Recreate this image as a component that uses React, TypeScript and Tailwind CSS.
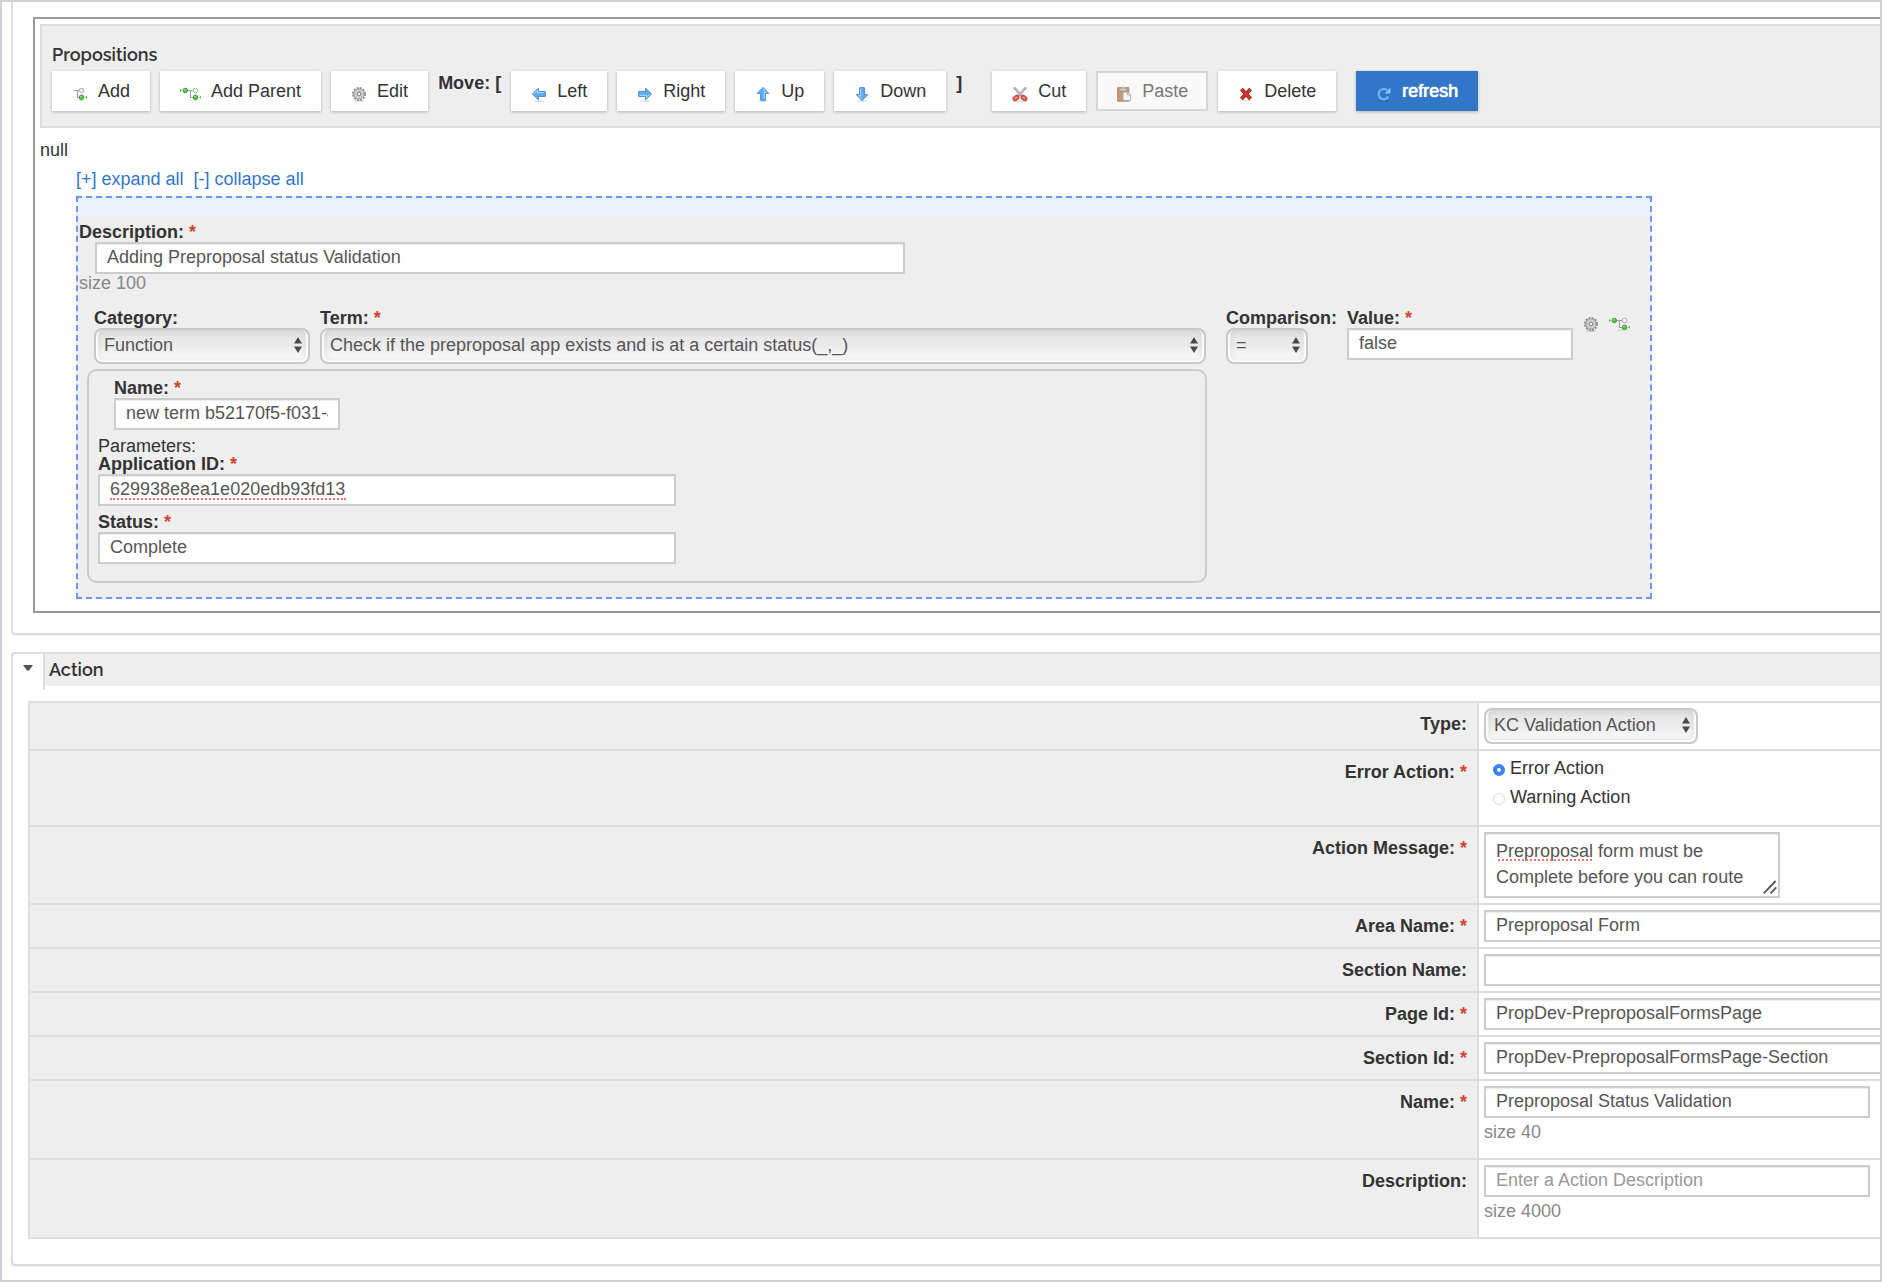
import type { ReactNode } from 'react';

const INPUT =
  'block h-8 border-2 border-[#ccc] bg-white px-[10px] pb-[2px] text-[18px] text-[#555] shadow-[inset_0_1px_1px_rgba(0,0,0,0.08)] outline-none placeholder:text-[#999]';
const LABEL = 'block text-[18px] leading-5 font-bold text-[#333]';
const HINT = 'text-[18px] text-[#888]';

/* ---------- icons ---------- */

function TreeNode({ x, y, green }: { x: number; y: number; green?: boolean }) {
  return (
    <>
      <circle
        cx={x}
        cy={y}
        r="2.3"
        fill={green ? '#4fc43f' : '#f2f2f2'}
        stroke={green ? '#3c9a33' : '#a5a5a5'}
        strokeWidth="0.9"
      />
      <circle cx={x - 0.5} cy={y - 0.7} r="0.8" fill={green ? '#a5ec94' : '#fff'} />
    </>
  );
}

function AddIcon() {
  return (
    <svg width="16" height="16" viewBox="0 0 16 16" aria-hidden="true">
      <ellipse cx="9" cy="14" rx="5" ry="0.8" fill="#000" opacity="0.12" />
      <path d="M2 4.5h7M5.5 4.5v7h4" fill="none" stroke="#9b9b9b" strokeWidth="1.1" />
      <TreeNode x={9.5} y={4.5} />
      <TreeNode x={9.5} y={11.3} green />
      <path d="M15 9.8v3l-2-1.5z" fill="#4fb541" />
    </svg>
  );
}

function AddParentIcon() {
  return (
    <svg width="21" height="16" viewBox="0 0 21 16" aria-hidden="true">
      <ellipse cx="14" cy="14" rx="6" ry="0.8" fill="#000" opacity="0.12" />
      <path d="M7 4.5h8M10.5 4.5v7h4" fill="none" stroke="#9b9b9b" strokeWidth="1.1" />
      <path d="M0 3v3l2-1.5z" fill="#4fb541" />
      <TreeNode x={5.3} y={4.5} green />
      <TreeNode x={15.5} y={4.5} />
      <TreeNode x={15.5} y={11.3} green />
      <path d="M21 9.8v3l-2-1.5z" fill="#4fb541" />
    </svg>
  );
}

function GearIcon() {
  return (
    <svg width="16" height="16" viewBox="0 0 16 16" aria-hidden="true">
      <ellipse cx="8" cy="14.8" rx="5" ry="0.9" fill="#000" opacity="0.18" />
      <circle cx="8" cy="8" r="6" fill="none" stroke="#8c8c8c" strokeWidth="2" strokeDasharray="1.9 1.24" />
      <circle cx="8" cy="8" r="5" fill="#dadada" stroke="#959595" strokeWidth="0.9" />
      <path d="M8 3.6v8.8M3.6 8h8.8M4.9 4.9l6.2 6.2M11.1 4.9l-6.2 6.2" stroke="#adadad" strokeWidth="0.8" />
      <circle cx="8" cy="8" r="1.8" fill="#f4f4f4" stroke="#777" strokeWidth="0.9" />
    </svg>
  );
}

const ARROW_ANGLE = { left: 0, up: 90, right: 180, down: 270 };

function ArrowIcon({ dir }: { dir: keyof typeof ARROW_ANGLE }) {
  return (
    <svg width="16" height="16" viewBox="0 0 16 16" aria-hidden="true">
      <ellipse cx="8" cy="15" rx="5" ry="0.8" fill="#000" opacity="0.16" />
      <g transform={`rotate(${ARROW_ANGLE[dir]} 8 8)`}>
        <path
          d="M1.4 8 7.4 2.2v3.4h6.9v4.8H7.4v3.4z"
          fill="#5cb0f2"
          stroke="#4280c4"
          strokeWidth="0.9"
          strokeLinejoin="round"
        />
        <path d="M3.2 7.8 6.6 4.5v2.1h6.6" fill="none" stroke="#b4ddfb" strokeWidth="0.9" />
      </g>
    </svg>
  );
}

function CutIcon() {
  return (
    <svg width="16" height="16" viewBox="0 0 16 16" aria-hidden="true">
      <ellipse cx="8" cy="15.2" rx="6.5" ry="0.7" fill="#000" opacity="0.15" />
      <path d="M2 1.6l8.2 8.4M14 1.6 5.8 10" stroke="#8e8e8e" strokeWidth="2.2" />
      <path d="M2.4 1.8l8 8.2M13.6 1.8l-8 8.2" stroke="#e4e4e4" strokeWidth="0.9" />
      <ellipse cx="4" cy="12" rx="2.9" ry="1.9" transform="rotate(-32 4 12)" fill="#f08d86" stroke="#cf4540" strokeWidth="1.6" />
      <ellipse cx="12" cy="12" rx="2.9" ry="1.9" transform="rotate(32 12 12)" fill="#f08d86" stroke="#cf4540" strokeWidth="1.6" />
    </svg>
  );
}

function PasteIcon() {
  return (
    <svg width="16" height="16" viewBox="0 0 16 16" aria-hidden="true">
      <path d="M1.6 1.6h11.2v13.6H1.6z" fill="#c39a78" stroke="#a8795a" strokeWidth="0.8" />
      <path d="M4 2.6h6.4v2H4z" fill="#e9e4dd" stroke="#999" strokeWidth="0.6" />
      <path d="M5.8 1h2.8v1.8H5.8z" fill="#d5d5d5" stroke="#999" strokeWidth="0.5" />
      <path d="M7 6h4.4L14.6 9v5.6H7z" fill="#f4f7f8" stroke="#8fa0a5" strokeWidth="0.8" />
      <path d="M11.4 6v3h3.2" fill="#d7e0e3" stroke="#8fa0a5" strokeWidth="0.7" />
    </svg>
  );
}

function DeleteIcon() {
  return (
    <svg width="16" height="16" viewBox="0 0 16 16" aria-hidden="true">
      <ellipse cx="8" cy="14.6" rx="5.5" ry="0.7" fill="#000" opacity="0.15" />
      <path d="M3.4 3.2l9.2 9.6M12.6 3.2l-9.2 9.6" stroke="#9c1f17" strokeWidth="3.9" />
      <path d="M3.7 3.5l8.6 9M12.3 3.5l-8.6 9" stroke="#cb3a30" strokeWidth="2.4" />
    </svg>
  );
}

function RefreshIcon() {
  return (
    <svg width="16" height="16" viewBox="0 0 16 16" aria-hidden="true">
      <ellipse cx="8" cy="14.8" rx="5" ry="0.8" fill="#000" opacity="0.2" />
      <path d="M12.4 10.6A5.2 5.2 0 1 1 11.2 4.2" fill="none" stroke="#69b6f5" strokeWidth="2.2" />
      <path d="M14.4 1.6v5.8H8.8z" fill="#8fcbfa" />
    </svg>
  );
}

/* ---------- controls ---------- */

type ToolButtonProps = {
  icon: ReactNode;
  children: ReactNode;
  variant?: 'default' | 'disabled' | 'primary';
};

const TOOL_VARIANT = {
  default: 'bg-white px-5 text-[#333] shadow-[0_1px_3px_rgba(0,0,0,0.25)]',
  disabled: 'border-2 border-[#d6d6d6] bg-[#f9f9f9] px-[18px] text-[#777]',
  primary:
    'ml-[10px] bg-[#3276c8] px-5 text-white shadow-[0_1px_3px_rgba(0,0,0,0.25)] [text-shadow:0_0_1px_white,0_0_1px_white]',
};

function ToolButton({ icon, children, variant = 'default' }: ToolButtonProps) {
  return (
    <button
      type="button"
      disabled={variant === 'disabled'}
      className={`flex h-10 shrink-0 items-center gap-[10px] whitespace-nowrap ${TOOL_VARIANT[variant]}`}
    >
      <span className="pt-[6px]">{icon}</span>
      {children}
    </button>
  );
}

function Required() {
  return <span className="text-[#d0452b]"> *</span>;
}

type SelectProps = { id: string; value: string; className: string };

function Select({ id, value, className }: SelectProps) {
  return (
    <div className={`relative ${className}`}>
      <select
        id={id}
        className="block h-9 w-full appearance-none rounded-[8px] border-2 border-[#c8c8c8] bg-linear-to-b from-[#e6e6e6] via-[#ebebeb] to-white px-2 pb-[2px] text-[18px] text-[#555] shadow-[inset_2px_-1px_2px_#ffffff,inset_-2px_-1px_2px_#ffffff,inset_0_0_9px_rgba(0,0,0,0.16)] outline-none"
      >
        <option>{value}</option>
      </select>
      <svg
        width="8"
        height="16"
        viewBox="0 0 8 16"
        aria-hidden="true"
        className="pointer-events-none absolute top-[9px] right-2"
      >
        <path d="M4 0 8 6.5H0zM4 16 0 9.5h8z" fill="#4a4a4a" />
      </svg>
    </div>
  );
}

type RowProps = { label: string; htmlFor?: string; required?: boolean; className?: string; children: ReactNode };

function Row({ label, htmlFor, required, className = '', children }: RowProps) {
  return (
    <tr className={`border-t-2 border-[#ddd] ${className}`}>
      <th scope="row" className="border-r-2 border-[#ddd] bg-[#eee] pt-[11px] pr-[10px] text-right align-top">
        <label htmlFor={htmlFor} className={LABEL}>
          {label}:{required && <Required />}
        </label>
      </th>
      <td className="py-[5px] pl-[5px] align-top">{children}</td>
    </tr>
  );
}

/* ---------- sections ---------- */

function Toolbar() {
  return (
    <div className="border-2 border-r-0 border-[#ddd] bg-[#eee] pt-[17px] pb-[15px] pl-[10px]">
      <h3 className="mb-1 font-[Raleway,Lato,sans-serif] text-[18px] leading-6 font-semibold">Propositions</h3>
      <div className="flex items-start gap-[10px]">
        <ToolButton icon={<AddIcon />}>Add</ToolButton>
        <ToolButton icon={<AddParentIcon />}>Add Parent</ToolButton>
        <ToolButton icon={<GearIcon />}>Edit</ToolButton>
        <span className="leading-6 font-bold whitespace-nowrap">Move: [</span>
        <ToolButton icon={<ArrowIcon dir="left" />}>Left</ToolButton>
        <ToolButton icon={<ArrowIcon dir="right" />}>Right</ToolButton>
        <ToolButton icon={<ArrowIcon dir="up" />}>Up</ToolButton>
        <ToolButton icon={<ArrowIcon dir="down" />}>Down</ToolButton>
        <span className="mr-5 leading-6 font-bold">]</span>
        <ToolButton icon={<CutIcon />}>Cut</ToolButton>
        <ToolButton icon={<PasteIcon />} variant="disabled">
          Paste
        </ToolButton>
        <ToolButton icon={<DeleteIcon />}>Delete</ToolButton>
        <ToolButton icon={<RefreshIcon />} variant="primary">
          refresh
        </ToolButton>
      </div>
    </div>
  );
}

function TermBox() {
  return (
    <div className="mt-[5px] rounded-[10px] border-2 border-[#ccc] pt-[7px] pb-[17px] pl-[9px]">
      <div className="pl-4">
        <label htmlFor="term-name" className={LABEL}>
          Name:
          <Required />
        </label>
        <input id="term-name" className={`${INPUT} w-[226px]`} defaultValue="new term b52170f5-f031-4b1e" />
      </div>
      <p className="mt-[7px] leading-[18px]">Parameters:</p>
      <label htmlFor="application-id" className="mb-px block leading-[18px] font-bold">
        Application ID:
        <Required />
      </label>
      <div className="relative">
        <input id="application-id" className={`${INPUT} w-[578px]`} defaultValue="629938e8ea1e020edb93fd13" />
        <span className="pointer-events-none absolute top-6 left-3 w-[236px] border-b-2 border-dotted border-[#f4756c]" />
      </div>
      <label htmlFor="status" className={`${LABEL} mt-[6px]`}>
        Status:
        <Required />
      </label>
      <input id="status" className={`${INPUT} w-[578px]`} defaultValue="Complete" />
    </div>
  );
}

function PropositionEditor() {
  return (
    <div className="mt-[5px] ml-9 w-fit border-2 border-dashed border-[#6f94f5] bg-[#e7f3f9] pt-[18px]">
      <div className="bg-[#eee] pt-[6px] pb-[14px]">
        <div className="pl-px">
          <label htmlFor="description" className={LABEL}>
            Description:
            <Required />
          </label>
          <input id="description" className={`${INPUT} ml-4 w-[810px]`} defaultValue="Adding Preproposal status Validation" />
          <p className={`${HINT} leading-[18px]`}>size 100</p>
        </div>
        <div className="mt-4 flex items-start pr-5 pl-[9px]">
          <div>
            <div className="flex gap-[10px] pr-px pl-[7px]">
              <div>
                <label htmlFor="category" className={LABEL}>
                  Category:
                </label>
                <Select id="category" value="Function" className="w-[216px]" />
              </div>
              <div>
                <label htmlFor="term" className={LABEL}>
                  Term:
                  <Required />
                </label>
                <Select
                  id="term"
                  value="Check if the preproposal app exists and is at a certain status(_,_)"
                  className="w-[886px]"
                />
              </div>
            </div>
            <TermBox />
          </div>
          <div className="ml-[19px] w-[121px]">
            <label htmlFor="comparison" className={LABEL}>
              Comparison:
            </label>
            <Select id="comparison" value="=" className="w-[82px]" />
          </div>
          <div>
            <label htmlFor="value" className={LABEL}>
              Value:
              <Required />
            </label>
            <input id="value" className={`${INPUT} w-[226px]`} defaultValue="false" />
          </div>
          <div className="mt-2 ml-[10px] flex gap-[10px]">
            <button type="button" aria-label="Edit">
              <GearIcon />
            </button>
            <button type="button" aria-label="Add Parent">
              <AddParentIcon />
            </button>
          </div>
        </div>
      </div>
    </div>
  );
}

function ActionSection() {
  return (
    <section className="mt-[17px] ml-[9px] rounded-l-[4px] border-2 border-r-0 border-[#ddd] pb-[25px] shadow-[0_1px_2px_rgba(0,0,0,0.06)]">
      <div className="flex items-start">
        <button type="button" aria-label="Collapse" className="h-9 w-8 border-r-2 border-[#ddd] pb-2">
          <svg width="10" height="6" viewBox="0 0 10 6" aria-hidden="true" className="mx-auto">
            <path d="M0 0h10L6 5.4H4z" fill="#555" />
          </svg>
        </button>
        <h3 className="h-8 grow bg-[#eee] pl-1 font-[Raleway,Lato,sans-serif] text-[18px] leading-8 font-semibold">
          Action
        </h3>
      </div>
      <div className="mt-[11px] ml-[15px]">
        <table className="w-full table-fixed border-collapse border-b-2 border-l-2 border-[#ddd]">
          <colgroup>
            <col />
            <col className="w-[402px]" />
          </colgroup>
          <tbody>
            <Row label="Type" htmlFor="type">
              <Select id="type" value="KC Validation Action" className="w-[214px]" />
            </Row>
            <Row label="Error Action" required className="h-[76px]">
              <div className="-mt-[2px]">
                {['Error Action', 'Warning Action'].map((name, i) => (
                  <label key={name} className="flex h-[29px] items-center gap-[5px] pl-[9px]">
                    <input
                      type="radio"
                      name="error-action"
                      defaultChecked={i === 0}
                      className="mt-[2px] size-3 appearance-none rounded-full border border-[#ddd] bg-white checked:border-4 checked:border-[#3b82f6]"
                    />
                    {name}
                  </label>
                ))}
              </div>
            </Row>
            <Row label="Action Message" htmlFor="message" required>
              <div className="relative w-[296px]">
                <textarea
                  id="message"
                  className="block h-[66px] w-full resize-none overflow-hidden border-2 border-[#ccc] px-[10px] py-1 text-[18px] leading-[26px] text-[#555] shadow-[inset_0_1px_1px_rgba(0,0,0,0.08)] outline-none"
                  defaultValue={'Preproposal form must be\nComplete before you can route'}
                />
                <span className="pointer-events-none absolute top-[27px] left-[14px] w-[94px] border-b-2 border-dotted border-[#f4756c]" />
                <svg
                  width="14"
                  height="14"
                  viewBox="0 0 14 14"
                  aria-hidden="true"
                  className="pointer-events-none absolute right-[3px] bottom-1"
                >
                  <path d="M.7 13.3 12.6 1M7.5 13.3l5.8-6" stroke="#555" strokeWidth="1.8" />
                </svg>
              </div>
            </Row>
            <Row label="Area Name" htmlFor="area-name" required>
              <input id="area-name" className={`${INPUT} w-full border-r-0`} defaultValue="Preproposal Form" />
            </Row>
            <Row label="Section Name" htmlFor="section-name">
              <input id="section-name" className={`${INPUT} w-full border-r-0`} />
            </Row>
            <Row label="Page Id" htmlFor="page-id" required>
              <input id="page-id" className={`${INPUT} w-full border-r-0`} defaultValue="PropDev-PreproposalFormsPage" />
            </Row>
            <Row label="Section Id" htmlFor="section-id" required>
              <input
                id="section-id"
                className={`${INPUT} w-full border-r-0`}
                defaultValue="PropDev-PreproposalFormsPage-Section"
              />
            </Row>
            <Row label="Name" htmlFor="name" required className="h-[79px]">
              <input id="name" className={`${INPUT} w-[386px]`} defaultValue="Preproposal Status Validation" />
              <p className={`${HINT} mt-1 leading-5`}>size 40</p>
            </Row>
            <Row label="Description" htmlFor="action-description" className="h-[79px]">
              <input id="action-description" className={`${INPUT} w-[386px]`} placeholder="Enter a Action Description" />
              <p className={`${HINT} mt-1 leading-5`}>size 4000</p>
            </Row>
          </tbody>
        </table>
      </div>
    </section>
  );
}

export default function App() {
  return (
    <main className="overflow-hidden border-2 border-[#cdd2d6] bg-white pb-[14px] font-['Liberation_Sans',Arial,sans-serif] text-[18px] text-[#333]">
      <section className="ml-[9px] rounded-bl-[4px] border-b-2 border-l-2 border-[#ddd] pt-[15px] pb-5 pl-5 shadow-[0_1px_2px_rgba(0,0,0,0.06)]">
        <div className="border-2 border-r-0 border-[#999] pt-[5px] pb-3 pl-[5px]">
          <Toolbar />
          <p className="mt-[10px] leading-6">null</p>
          <div className="mt-[5px] ml-9 flex gap-[10px] leading-6 text-[#3276c8]">
            <a href="#expand">[+] expand all</a>
            <a href="#collapse">[-] collapse all</a>
          </div>
          <PropositionEditor />
        </div>
      </section>
      <ActionSection />
    </main>
  );
}
